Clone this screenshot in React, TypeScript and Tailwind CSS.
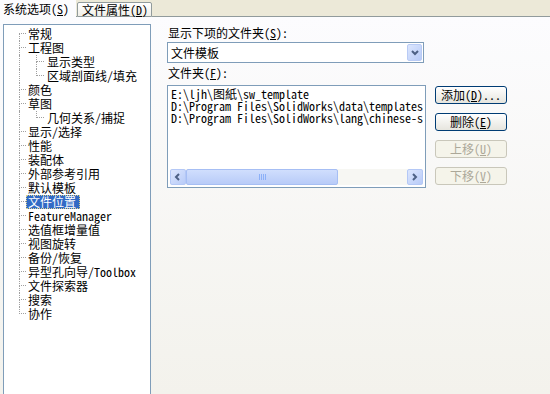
import React from 'react';

const TREE = [
  { label: '常规', level: 1 },
  { label: '工程图', level: 1 },
  { label: '显示类型', level: 2 },
  { label: '区域剖面线/填充', level: 2, lastChild: true },
  { label: '颜色', level: 1 },
  { label: '草图', level: 1 },
  { label: '几何关系/捕捉', level: 2, lastChild: true },
  { label: '显示/选择', level: 1 },
  { label: '性能', level: 1 },
  { label: '装配体', level: 1 },
  { label: '外部参考引用', level: 1 },
  { label: '默认模板', level: 1 },
  { label: '文件位置', level: 1, selected: true },
  { label: 'FeatureManager', level: 1 },
  { label: '选值框增量值', level: 1 },
  { label: '视图旋转', level: 1 },
  { label: '备份/恢复', level: 1 },
  { label: '异型孔向导/Toolbox', level: 1 },
  { label: '文件探索器', level: 1 },
  { label: '搜索', level: 1 },
  { label: '协作', level: 1 },
];

const PATHS = [
  'E:\\ljh\\图紙\\sw_template',
  'D:\\Program Files\\SolidWorks\\data\\templates',
  'D:\\Program Files\\SolidWorks\\lang\\chinese-simplified',
];

const dot = 'border-dotted border-[#a0a0a0]';

function TreeRow({ item, first, last }: { item: (typeof TREE)[number]; first: boolean; last: boolean }) {
  return (
    <div className="flex h-[14px]">
      <div className="w-[15px] shrink-0" />
      {item.level === 1 ? (
        <div className="flex w-[7px] shrink-0 flex-col">
          <div className={`h-[7px] w-[7px] border-b ${dot} ${first ? '' : 'border-l'}`} />
          <div className={`h-[7px] ${last ? '' : `border-l ${dot}`}`} />
        </div>
      ) : (
        <>
          <div className={`w-[17px] shrink-0 border-l ${dot}`} />
          <div className="flex w-[9px] shrink-0 flex-col">
            <div className={`h-[7px] w-[8px] border-b border-l ${dot}`} />
            <div className={`h-[7px] ${item.lastChild ? '' : `border-l ${dot}`}`} />
          </div>
        </>
      )}
      <span
        className={`whitespace-nowrap px-[2px] leading-[14px] ${
          item.selected ? 'bg-[#316ac5] pr-[4px] text-white outline-1 -outline-offset-1 outline-dotted outline-[#d8d090]' : 'text-black'
        }`}
      >
        {item.label}
      </span>
    </div>
  );
}

function Arrow({ dir }: { dir: 'left' | 'right' | 'down' }) {
  const d = dir === 'left' ? 'M5 1 L2 4 L5 7' : dir === 'right' ? 'M2 1 L5 4 L2 7' : 'M1 2 L4 5 L7 2';
  return (
    <svg width="8" height="8" viewBox="0 0 8 8">
      <path d={d} fill="none" stroke="#4d6185" strokeWidth="2" />
    </svg>
  );
}

function ScrollButton({ dir }: { dir: 'left' | 'right' }) {
  return (
    <div className="flex h-[16px] w-[16px] shrink-0 items-center justify-center rounded-[2px] border border-[#b4c8f6] bg-gradient-to-br from-[#dce6fd] to-[#b8cbf8]">
      <Arrow dir={dir} />
    </div>
  );
}

function XpButton({ label, mn, rest, disabled }: { label: string; mn: string; rest?: string; disabled?: boolean }) {
  return (
    <div
      className={`flex h-[18px] w-[72px] items-center justify-center rounded-[3px] border leading-[12px] ${
        disabled
          ? 'border-[#c9c7ba] bg-[#f5f4ea] text-[#aca899]'
          : 'border-[#003c74] bg-gradient-to-b from-white to-[#e6e5de] text-black'
      }`}
    >
      {label}(<u className="underline-offset-1">{mn}</u>){rest}
    </div>
  );
}

export default function App() {
  return (
    <div className="h-[394px] w-[550px] overflow-hidden bg-white text-[12px] font-['Noto_Sans_Mono_CJK_SC','Noto_Sans_CJK_SC',sans-serif]">
      {/* tabs */}
      <div className="flex h-[17px] bg-[#ece9d8]">
        <div className="flex h-[17px] w-[76px] shrink-0 items-center bg-[#fcfcfe] pl-[3px] leading-[12px]">
          系统选项(<u className="underline-offset-1">S</u>)
        </div>
        <div className="w-[1px] shrink-0 border-b border-[#919b9c]" />
        <div className="mt-[2px] flex h-[15px] w-[75px] shrink-0 items-center rounded-t-[2px] border border-[#919b9c] bg-gradient-to-b from-white to-[#f0efe8] pl-[4px] leading-[12px]">
          文件属性(<u className="underline-offset-1">D</u>)
        </div>
        <div className="flex-1 border-b border-[#919b9c]" />
      </div>

      {/* page */}
      <div className="flex h-[377px] bg-gradient-to-b from-[#fcfcfe] to-[#f3f2ec]">
        <div className="shrink-0 pl-[3px] pt-[7px]">
          <div className="h-[400px] w-[148px] border border-[#7f9db9] bg-white pt-[2px]">
            {TREE.map((item, i) => (
              <TreeRow key={item.label} item={item} first={i === 0} last={i === TREE.length - 1} />
            ))}
          </div>
        </div>

        <div className="flex flex-col pl-[16px] pt-[10px]">
          <div className="pl-[1px] leading-[12px]">
            显示下项的文件夹(<u className="underline-offset-1">S</u>):
          </div>
          <div className="mt-[3px] flex h-[21px] w-[257px] items-center border border-[#7f9db9] bg-white pl-[3px] pr-[1px]">
            <span className="flex-1 leading-[12px]">文件模板</span>
            <div className="flex h-[17px] w-[15px] items-center justify-center rounded-[2px] border border-[#b9cbf5] bg-gradient-to-br from-[#dce6fd] to-[#b8cbf8]">
              <Arrow dir="down" />
            </div>
          </div>
          <div className="mt-[4px] pl-[1px] leading-[12px]">
            文件夹(<u className="underline-offset-1">F</u>):
          </div>
          <div className="mt-[6px] flex">
            <div className="flex h-[103px] w-[259px] flex-col border border-[#7f9db9] bg-white p-[2px]">
              <div className="flex-1 overflow-hidden pl-[1px]">
                {PATHS.map((p) => (
                  <div key={p} className="whitespace-nowrap leading-[12px]">
                    {p}
                  </div>
                ))}
              </div>
              <div className="flex h-[16px] bg-[#f7f7f3]">
                <ScrollButton dir="left" />
                <div className="flex-1">
                  <div className="flex h-[16px] w-[152px] items-center justify-center gap-[1px] rounded-[2px] border border-[#a6bef4] bg-gradient-to-b from-[#d0defd] to-[#b8cbf8]">
                    <div className="h-[6px] w-[1px] bg-[#8cb0f8]" />
                    <div className="h-[6px] w-[1px] bg-[#8cb0f8]" />
                    <div className="h-[6px] w-[1px] bg-[#8cb0f8]" />
                    <div className="h-[6px] w-[1px] bg-[#8cb0f8]" />
                  </div>
                </div>
                <ScrollButton dir="right" />
              </div>
            </div>
            <div className="ml-[9px] mt-[1px] flex flex-col gap-[9px]">
              <XpButton label="添加" mn="D" rest="..." />
              <XpButton label="删除" mn="E" />
              <XpButton label="上移" mn="U" disabled />
              <XpButton label="下移" mn="V" disabled />
            </div>
          </div>
        </div>
      </div>
    </div>
  );
}
